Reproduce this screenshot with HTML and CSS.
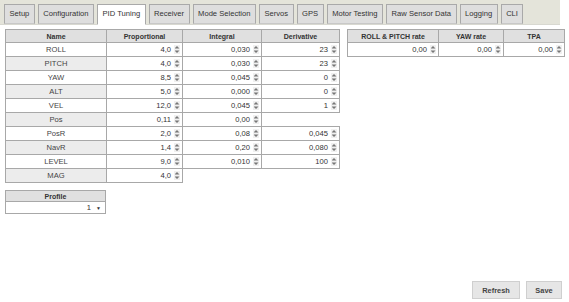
FILE: index.html
```html
<!DOCTYPE html>
<html>
<head>
<meta charset="utf-8">
<link rel="stylesheet" href="styles.css">
</head>
<body>
<div class="page">
  <div class="tabbar">
    <ul class="tabs">
      <li class="tab">Setup</li>
      <li class="tab">Configuration</li>
      <li class="tab active">PID Tuning</li>
      <li class="tab">Receiver</li>
      <li class="tab">Mode Selection</li>
      <li class="tab">Servos</li>
      <li class="tab">GPS</li>
      <li class="tab">Motor Testing</li>
      <li class="tab">Raw Sensor Data</li>
      <li class="tab">Logging</li>
      <li class="tab">CLI</li>
    </ul>
  </div>
  <div class="content">
    <div class="tables">
      <div class="leftcol">
        <table class="grid pid">
          <colgroup><col class="c-name"><col class="c-p"><col class="c-i"><col class="c-d"></colgroup>
          <thead>
            <tr><th>Name</th><th>Proportional</th><th>Integral</th><th>Derivative</th></tr>
          </thead>
          <tbody>
            <tr><td class="name">ROLL</td><td class="val"><span class="num">4,0</span><svg class="spin" viewBox="0 0 5 8" width="5" height="8"><path d="M0 3L2.5 0.5L5 3Z M0 5L2.5 7.5L5 5Z"/></svg></td><td class="val"><span class="num">0,030</span><svg class="spin" viewBox="0 0 5 8" width="5" height="8"><path d="M0 3L2.5 0.5L5 3Z M0 5L2.5 7.5L5 5Z"/></svg></td><td class="val"><span class="num">23</span><svg class="spin" viewBox="0 0 5 8" width="5" height="8"><path d="M0 3L2.5 0.5L5 3Z M0 5L2.5 7.5L5 5Z"/></svg></td></tr>
            <tr class="alt"><td class="name">PITCH</td><td class="val"><span class="num">4,0</span><svg class="spin" viewBox="0 0 5 8" width="5" height="8"><path d="M0 3L2.5 0.5L5 3Z M0 5L2.5 7.5L5 5Z"/></svg></td><td class="val"><span class="num">0,030</span><svg class="spin" viewBox="0 0 5 8" width="5" height="8"><path d="M0 3L2.5 0.5L5 3Z M0 5L2.5 7.5L5 5Z"/></svg></td><td class="val"><span class="num">23</span><svg class="spin" viewBox="0 0 5 8" width="5" height="8"><path d="M0 3L2.5 0.5L5 3Z M0 5L2.5 7.5L5 5Z"/></svg></td></tr>
            <tr><td class="name">YAW</td><td class="val"><span class="num">8,5</span><svg class="spin" viewBox="0 0 5 8" width="5" height="8"><path d="M0 3L2.5 0.5L5 3Z M0 5L2.5 7.5L5 5Z"/></svg></td><td class="val"><span class="num">0,045</span><svg class="spin" viewBox="0 0 5 8" width="5" height="8"><path d="M0 3L2.5 0.5L5 3Z M0 5L2.5 7.5L5 5Z"/></svg></td><td class="val"><span class="num">0</span><svg class="spin" viewBox="0 0 5 8" width="5" height="8"><path d="M0 3L2.5 0.5L5 3Z M0 5L2.5 7.5L5 5Z"/></svg></td></tr>
            <tr class="alt"><td class="name">ALT</td><td class="val"><span class="num">5,0</span><svg class="spin" viewBox="0 0 5 8" width="5" height="8"><path d="M0 3L2.5 0.5L5 3Z M0 5L2.5 7.5L5 5Z"/></svg></td><td class="val"><span class="num">0,000</span><svg class="spin" viewBox="0 0 5 8" width="5" height="8"><path d="M0 3L2.5 0.5L5 3Z M0 5L2.5 7.5L5 5Z"/></svg></td><td class="val"><span class="num">0</span><svg class="spin" viewBox="0 0 5 8" width="5" height="8"><path d="M0 3L2.5 0.5L5 3Z M0 5L2.5 7.5L5 5Z"/></svg></td></tr>
            <tr><td class="name">VEL</td><td class="val"><span class="num">12,0</span><svg class="spin" viewBox="0 0 5 8" width="5" height="8"><path d="M0 3L2.5 0.5L5 3Z M0 5L2.5 7.5L5 5Z"/></svg></td><td class="val"><span class="num">0,045</span><svg class="spin" viewBox="0 0 5 8" width="5" height="8"><path d="M0 3L2.5 0.5L5 3Z M0 5L2.5 7.5L5 5Z"/></svg></td><td class="val"><span class="num">1</span><svg class="spin" viewBox="0 0 5 8" width="5" height="8"><path d="M0 3L2.5 0.5L5 3Z M0 5L2.5 7.5L5 5Z"/></svg></td></tr>
            <tr class="alt"><td class="name">Pos</td><td class="val"><span class="num">0,11</span><svg class="spin" viewBox="0 0 5 8" width="5" height="8"><path d="M0 3L2.5 0.5L5 3Z M0 5L2.5 7.5L5 5Z"/></svg></td><td class="val"><span class="num">0,00</span><svg class="spin" viewBox="0 0 5 8" width="5" height="8"><path d="M0 3L2.5 0.5L5 3Z M0 5L2.5 7.5L5 5Z"/></svg></td></tr>
            <tr><td class="name">PosR</td><td class="val"><span class="num">2,0</span><svg class="spin" viewBox="0 0 5 8" width="5" height="8"><path d="M0 3L2.5 0.5L5 3Z M0 5L2.5 7.5L5 5Z"/></svg></td><td class="val"><span class="num">0,08</span><svg class="spin" viewBox="0 0 5 8" width="5" height="8"><path d="M0 3L2.5 0.5L5 3Z M0 5L2.5 7.5L5 5Z"/></svg></td><td class="val"><span class="num">0,045</span><svg class="spin" viewBox="0 0 5 8" width="5" height="8"><path d="M0 3L2.5 0.5L5 3Z M0 5L2.5 7.5L5 5Z"/></svg></td></tr>
            <tr class="alt"><td class="name">NavR</td><td class="val"><span class="num">1,4</span><svg class="spin" viewBox="0 0 5 8" width="5" height="8"><path d="M0 3L2.5 0.5L5 3Z M0 5L2.5 7.5L5 5Z"/></svg></td><td class="val"><span class="num">0,20</span><svg class="spin" viewBox="0 0 5 8" width="5" height="8"><path d="M0 3L2.5 0.5L5 3Z M0 5L2.5 7.5L5 5Z"/></svg></td><td class="val"><span class="num">0,080</span><svg class="spin" viewBox="0 0 5 8" width="5" height="8"><path d="M0 3L2.5 0.5L5 3Z M0 5L2.5 7.5L5 5Z"/></svg></td></tr>
            <tr><td class="name">LEVEL</td><td class="val"><span class="num">9,0</span><svg class="spin" viewBox="0 0 5 8" width="5" height="8"><path d="M0 3L2.5 0.5L5 3Z M0 5L2.5 7.5L5 5Z"/></svg></td><td class="val"><span class="num">0,010</span><svg class="spin" viewBox="0 0 5 8" width="5" height="8"><path d="M0 3L2.5 0.5L5 3Z M0 5L2.5 7.5L5 5Z"/></svg></td><td class="val"><span class="num">100</span><svg class="spin" viewBox="0 0 5 8" width="5" height="8"><path d="M0 3L2.5 0.5L5 3Z M0 5L2.5 7.5L5 5Z"/></svg></td></tr>
            <tr class="alt"><td class="name">MAG</td><td class="val"><span class="num">4,0</span><svg class="spin" viewBox="0 0 5 8" width="5" height="8"><path d="M0 3L2.5 0.5L5 3Z M0 5L2.5 7.5L5 5Z"/></svg></td></tr>
          </tbody>
        </table>
        <table class="grid profile">
          <thead><tr><th>Profile</th></tr></thead>
          <tbody><tr><td class="val sel"><span class="num">1</span><span class="caret">&#9660;</span></td></tr></tbody>
        </table>
      </div>
      <table class="grid rates">
        <colgroup><col class="c-rp"><col class="c-yaw"><col class="c-tpa"></colgroup>
        <thead><tr><th>ROLL &amp; PITCH rate</th><th>YAW rate</th><th>TPA</th></tr></thead>
        <tbody>
          <tr><td class="val"><span class="num">0,00</span><svg class="spin" viewBox="0 0 5 8" width="5" height="8"><path d="M0 3L2.5 0.5L5 3Z M0 5L2.5 7.5L5 5Z"/></svg></td><td class="val"><span class="num">0,00</span><svg class="spin" viewBox="0 0 5 8" width="5" height="8"><path d="M0 3L2.5 0.5L5 3Z M0 5L2.5 7.5L5 5Z"/></svg></td><td class="val"><span class="num">0,00</span><svg class="spin" viewBox="0 0 5 8" width="5" height="8"><path d="M0 3L2.5 0.5L5 3Z M0 5L2.5 7.5L5 5Z"/></svg></td></tr>
        </tbody>
      </table>
    </div>
  </div>
  <div class="actions">
    <button class="btn">Refresh</button>
    <button class="btn">Save</button>
  </div>
</div>
</body>
</html>
```
FILE: styles.css
```css
* { box-sizing: border-box; }
html, body { margin: 0; padding: 0; background: #fff; }
body {
  font-family: "Liberation Sans", Arial, sans-serif;
  font-size: 7.6px;
  color: #333;
}
.page {
  display: flex;
  flex-direction: column;
  height: 100vh;
}
.tabbar {
  height: 25px;
  background: #e4e4da;
  margin-right: 9px;
  border-bottom: 1px solid #d8d8d0;
}
.tabs {
  list-style: none;
  margin: 0;
  padding: 4px 0 0 4px;
  display: flex;
  gap: 3px;
}
.tab {
  height: 20px;
  line-height: 18px;
  padding: 0 4.5px;
  border: 1px solid #a9a9a9;
  border-bottom-color: #c8c8c8;
  background: #dedede;
  color: #333;
  white-space: nowrap;
}
.tab.active {
  background: #fff;
  border-bottom-color: #fff;
  height: 21px;
}
.content {
  flex: 1;
  padding: 4px 5px 0;
}
.tables {
  display: flex;
  align-items: flex-start;
  gap: 7px;
}
.leftcol {
  display: flex;
  flex-direction: column;
  gap: 7px;
}
.grid {
  border-collapse: collapse;
  table-layout: fixed;
}
.grid th, .grid td {
  border: 1px solid #a8a8a8;
  padding: 0;
}
.grid th {
  background: #e0e0e0;
  font-weight: bold;
  font-size: 7px;
  color: #333;
  height: 13px;
  text-align: center;
}
.grid td {
  height: 14px;
  background: #fff;
}
.grid td.name {
  text-align: center;
  color: #444;
}
.grid tr.alt td.name { background: #ececec; }
.pid { width: 334px; }
.c-name { width: 101px; }
.c-p { width: 76px; }
.c-i { width: 79px; }
.c-d { width: 78px; }
.rates { width: 217px; }
.c-rp { width: 91px; }
.c-yaw { width: 65px; }
.c-tpa { width: 61px; }
.profile { width: 101px; }
.profile th { height: 11px; }
.profile td { height: 12px; }
.val {
  text-align: right;
  white-space: nowrap;
  padding-right: 2px !important;
  color: #333;
}
.num {
  display: inline-block;
  vertical-align: middle;
  margin-right: 3px;
}
.spin {
  display: inline-block;
  vertical-align: middle;
  fill: #777;
  background: #f0f0f0;
  width: 6px;
  height: 9px;
  padding: 0.5px;
}
.sel .num { margin-right: 5px; }
.caret {
  display: inline-block;
  vertical-align: middle;
  font-size: 5px;
  color: #333;
  margin-right: 2px;
}
.actions {
  display: flex;
  justify-content: flex-end;
  gap: 6px;
  padding: 0 7px 3px 0;
}
.btn {
  font-family: "Liberation Sans", Arial, sans-serif;
  font-size: 7.4px;
  font-weight: bold;
  color: #444;
  background: #e6e6e6;
  border: 1px solid #cfcfcf;
  border-radius: 0;
  height: 18px;
  padding: 0;
  margin: 0;
}
.btn:first-child { width: 48px; }
.btn:last-child { width: 36px; }
```
